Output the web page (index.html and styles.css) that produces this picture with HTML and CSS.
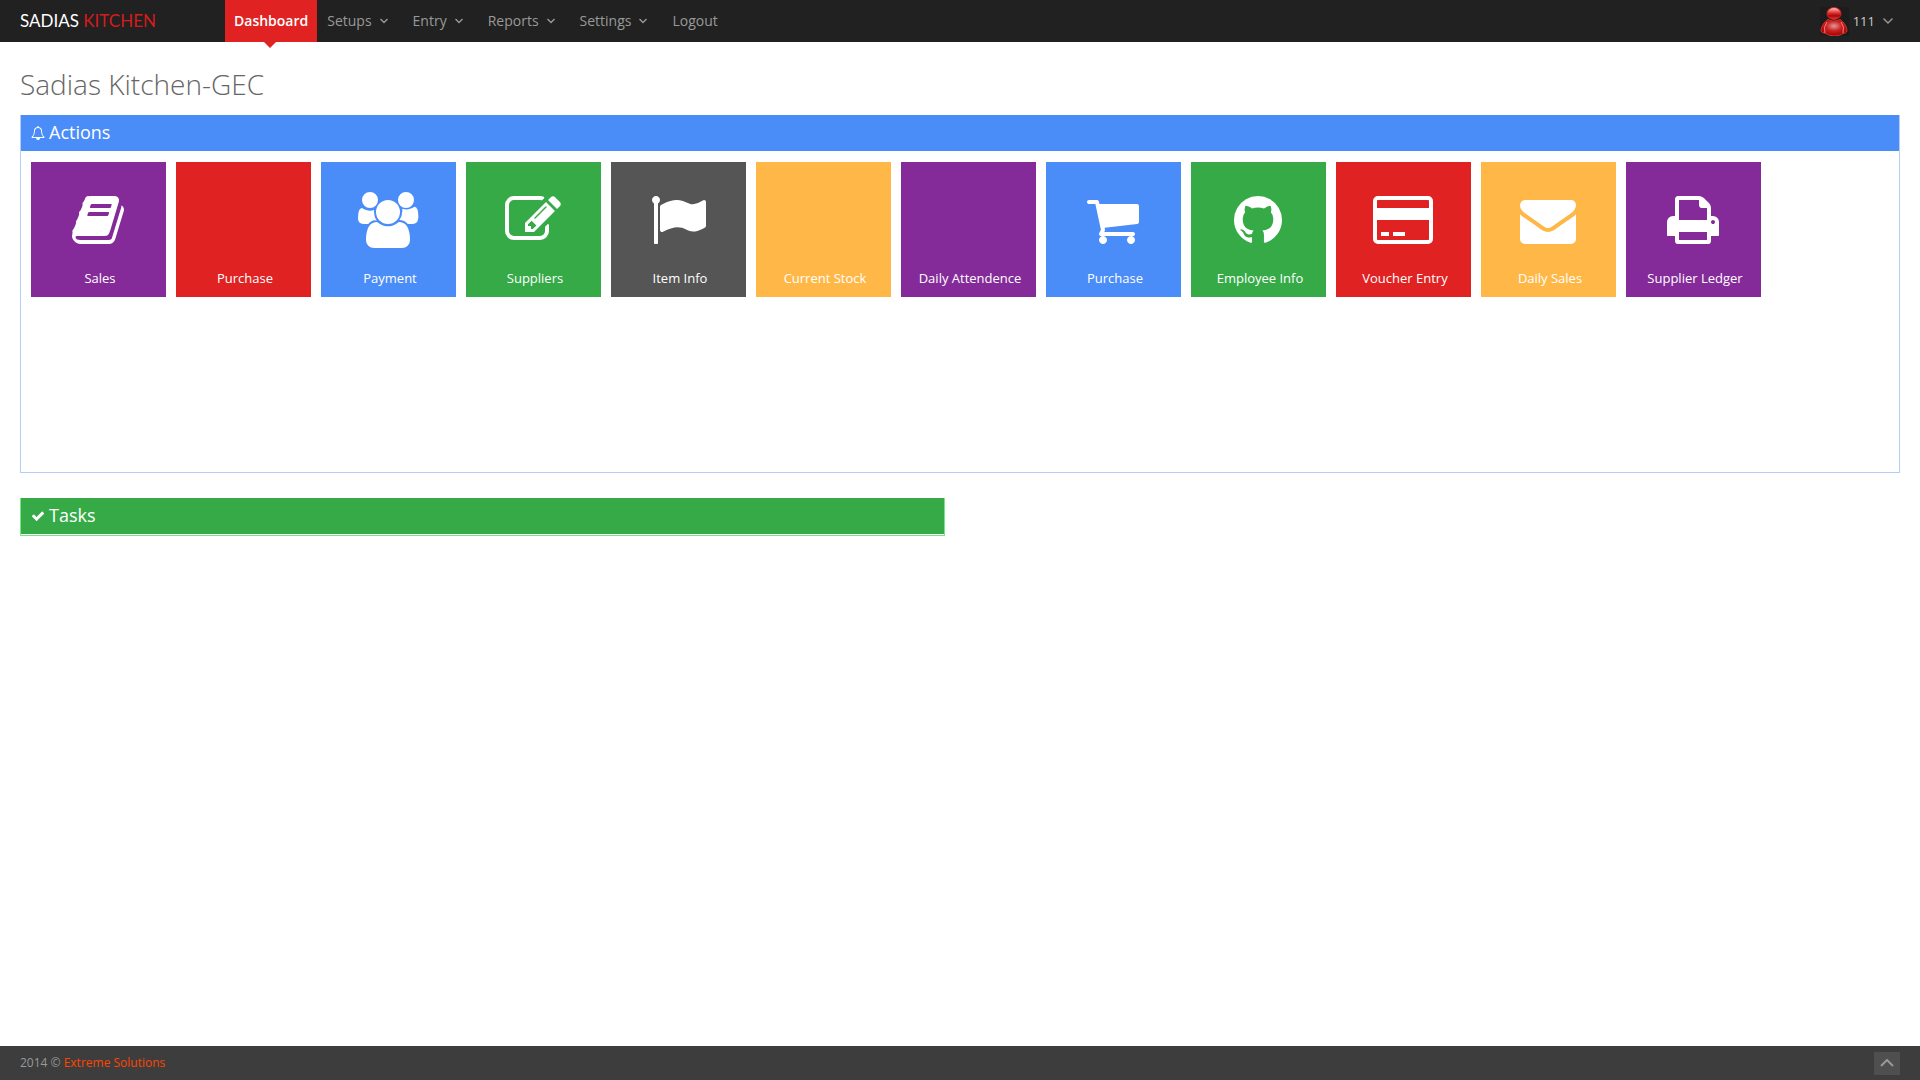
FILE: index.html
```html
<!DOCTYPE html>
<html lang="en">
<head>
  <meta charset="UTF-8">
  <title>Sadias Kitchen | Dashboard</title>
  <link rel="stylesheet" href="styles.css">
</head>
<body>
  <header class="header">
    <a class="brand" href="index.html">SADIAS <span>KITCHEN</span></a>
    <nav class="menu">
      <a class="active" href="index.html">Dashboard</a>
      <a href="#">Setups <svg class="arrow" viewBox="0 0 8 6"><path d="M.5 1L4 4.500 7.500 1"/></svg></a>
      <a href="#">Entry <svg class="arrow" viewBox="0 0 8 6"><path d="M.5 1L4 4.500 7.500 1"/></svg></a>
      <a href="#">Reports <svg class="arrow" viewBox="0 0 8 6"><path d="M.5 1L4 4.500 7.500 1"/></svg></a>
      <a href="#">Settings <svg class="arrow" viewBox="0 0 8 6"><path d="M.5 1L4 4.500 7.500 1"/></svg></a>
      <a href="login.html">Logout</a>
    </nav>
    <a class="user" href="#">
      <svg class="avatar" viewBox="0 0 29 29">
        <defs>
          <radialGradient id="body" cx="50%" cy="40%" r="60%">
            <stop offset="0" stop-color="#e09a94"/>
            <stop offset="0.5" stop-color="#c22"/>
            <stop offset="1" stop-color="#a00000"/>
          </radialGradient>
          <linearGradient id="head" x1="0" y1="0" x2="0" y2="1">
            <stop offset="0" stop-color="#fbd0cc"/>
            <stop offset="0.45" stop-color="#e03030"/>
            <stop offset="0.7" stop-color="#a80808"/>
            <stop offset="1" stop-color="#e04040"/>
          </linearGradient>
        </defs>
        <rect width="29" height="29" fill="#1c1c1c"/>
        <path d="M8 12.500C4 15 1 20 1 24c1 2 3 2 5 2.500 4 3 13 3 17 0 2-.5 3-.5 4-2.500 0-4-3-9-7-11.500-4 2-8 2-12 0z" fill="url(#body)" stroke="#d83030"/>
        <path d="M7 15q-4 5-2 11M21 15q4 5 2 11" fill="none" stroke="#f08080"/>
        <ellipse cx="14" cy="6.500" rx="7" ry="6" fill="url(#head)" stroke="#d02020"/>
      </svg>
      <span>111</span>
      <svg class="arrow big" viewBox="0 0 10 6"><path d="M.5 .5L5 5 9.500 .5"/></svg>
    </a>
  </header>

  <main class="content">
    <h1>Sadias Kitchen-GEC</h1>

    <section class="panel blue">
      <h2>
        <svg viewBox="0 0 1792 1792"><path d="M912 1696q0-16-16-16-59 0-101.500-42.500t-42.500-101.500q0-16-16-16t-16 16q0 73 51.500 124.500t124.500 51.500q16 0 16-16zm-666-288h1300q-266-300-266-832 0-51-24-105t-69-103-121.500-80.500-169.500-31.500-169.500 31.500-121.500 80.500-69 103-24 105q0 532-266 832zm1482 0q0 52-38 90t-90 38h-448q0 106-75 181t-181 75-181-75-75-181h-448q-52 0-90-38t-38-90q50-42 91-88t85-119.500 74.500-158.500 50-206 19.500-260q0-152 117-282.500t307-158.500q-8-19-8-39 0-40 28-68t68-28 68 28 28 68q0 20-8 39 190 28 307 158.500t117 282.500q0 139 19.500 260t50 206 74.500 158.500 85 119.500 91 88z"/></svg>
        Actions
      </h2>
      <div class="tiles">
        <a class="tile purple" href="#">
          <svg viewBox="0 0 1792 1792"><path d="M1703 478q40 57 18 129l-275 906q-19 64-76.500 107.500t-122.500 43.500h-923q-77 0-148.500-53.500t-99.500-131.500q-24-67-2-127 0-4 3-27t4-37q1-8-3-21.500t-3-19.500q2-11 8-21t16.500-23.500 16.500-23.500q23-38 45-91.500t30-91.500q3-10 .5-30t-.5-28q3-11 17-28t17-23q21-36 42-92t25-90q1-9-2.500-32t.5-28q4-13 22-30.500t22-22.500q19-26 42.500-84.500t27.500-96.500q1-8-3-25.500t-2-26.500q2-8 9-18t18-23 17-21q8-12 16.500-30.500t15-35 16-36 19.500-32 26.500-23.500 36-11.500 47.500 5.500l-1 3q38-9 51-9h761q74 0 114 56t18 130l-274 906q-36 119-71.500 153.500t-128.500 34.500h-869q-27 0-38 15-11 16-1 43 24 70 144 70h923q29 0 56-15.500t35-41.500l300-987q7-22 5-57 38 15 59 43zm-1064 2q-4 13 2 22.500t20 9.500h608q13 0 25.500-9.500t16.500-22.500l21-64q4-13-2-22.500t-20-9.500h-608q-13 0-25.500 9.500t-16.500 22.500zm-83 256q-4 13 2 22.500t20 9.500h608q13 0 25.500-9.500t16.500-22.500l21-64q4-13-2-22.500t-20-9.500h-608q-13 0-25.500 9.500t-16.500 22.500z"/></svg>
          <span>Sales</span>
        </a>
        <a class="tile red" href="#">
          <span>Purchase</span>
        </a>
        <a class="tile blue" href="#">
          <svg viewBox="0 0 2048 1792"><path d="M657 896q-162 5-265 128h-134q-82 0-138-40.500t-56-118.500q0-353 124-353 6 0 43.500 21t97.500 42.500 119 21.500q67 0 133-23-5 37-5 66 0 159 93 293zm1071 637q0 120-73 189.500t-194 69.500h-874q-121 0-194-69.500t-73-189.500q0-53 3.500-103.500t14-109 26.500-108.500 43-97.500 62-81 85.500-53.500 111.500-20q10 0 43 21.500t73 48 107 48 135 21.500 135-21.500 107-48 73-48 43-21.500q61 0 111.500 20t85.500 53.500 62 81 43 97.500 26.500 108.500 14 109 3.500 103.500zm-1024-1277q0 106-75 181t-181 75-181-75-75-181 75-181 181-75 181 75 75 181zm704 384q0 159-112.500 271.500t-271.500 112.500-271.500-112.500-112.500-271.500 112.500-271.500 271.500-112.500 271.500 112.500 112.500 271.500zm576 225q0 78-56 118.500t-138 40.500h-134q-103-123-265-128 93-134 93-293 0-29-5-66 66 23 133 23 59 0 119-21.500t97.500-42.500 43.500-21q124 0 124 353zm-128-609q0 106-75 181t-181 75-181-75-75-181 75-181 181-75 181 75 75 181z"/></svg>
          <span>Payment</span>
        </a>
        <a class="tile green" href="#">
          <svg viewBox="0 0 1792 1792"><path d="M888 1184l116-116-152-152-116 116v56h96v96h56zm440-720q-16-16-33 1l-350 350q-17 17-1 33t33-1l350-350q17-17 1-33zm80 594v190q0 119-84.500 203.500t-203.500 84.500h-832q-119 0-203.500-84.500t-84.500-203.500v-832q0-119 84.500-203.500t203.500-84.500h832q63 0 117 25 15 7 18 23 3 17-9 29l-49 49q-14 14-32 8-23-6-45-6h-832q-66 0-113 47t-47 113v832q0 66 47 113t113 47h832q66 0 113-47t47-113v-126q0-13 9-22l64-64q15-15 35-7t20 29zm-96-738l288 288-672 672h-288v-288zm444 132l-92 92-288-288 92-92q28-28 68-28t68 28l152 152q28 28 28 68t-28 68z"/></svg>
          <span>Suppliers</span>
        </a>
        <a class="tile grey" href="#">
          <svg viewBox="0 0 1792 1792"><path d="M320 256q0 72-64 110v1266q0 13-9.500 22.500t-22.500 9.500h-64q-13 0-22.500-9.500t-9.500-22.500v-1266q-64-38-64-110 0-53 37.500-90.500t90.500-37.500 90.500 37.500 37.500 90.500zm1472 64v763q0 25-12.500 38.500t-39.500 27.500q-215 116-369 116-61 0-123.500-22t-108.500-48-115.500-48-142.500-22q-192 0-464 146-17 9-33 9-26 0-45-19t-19-45v-742q0-32 31-55 21-14 79-43 236-120 421-120 107 0 200 29t219 88q38 19 88 19 54 0 117.500-21t110-47 88-47 54.500-21q26 0 45 19t19 45z"/></svg>
          <span>Item Info</span>
        </a>
        <a class="tile yellow" href="#">
          <span>Current Stock</span>
        </a>
        <a class="tile purple" href="#">
          <span>Daily Attendence</span>
        </a>
        <a class="tile blue" href="#">
          <svg viewBox="0 0 1792 1792"><path d="M704 1536q0 52-38 90t-90 38-90-38-38-90 38-90 90-38 90 38 38 90zm896 0q0 52-38 90t-90 38-90-38-38-90 38-90 90-38 90 38 38 90zm128-1088v512q0 24-16.500 42.500t-40.500 21.500l-1044 122q13 60 13 70 0 16-24 64h920q26 0 45 19t19 45-19 45-45 19h-1024q-26 0-45-19t-19-45q0-11 8-31.500t16-36 21.500-40 15.500-29.500l-177-823h-204q-26 0-45-19t-19-45 19-45 45-19h256q16 0 28.500 6.500t19.500 15.500 13 24.500 8 26 5.500 29.500 4.500 26h1201q26 0 45 19t19 45z"/></svg>
          <span>Purchase</span>
        </a>
        <a class="tile green" href="#">
          <svg viewBox="0 0 1792 1792"><path d="M896 128q209 0 385.500 103t279.500 279.500 103 385.500q0 251-146.500 451.500t-378.500 277.500q-27 5-40-7t-13-30q0-3 .5-76.500t.5-134.500q0-97-52-142 57-6 102.500-18t94-39 81-66.500 53-105 20.500-150.500q0-119-79-206 37-91-8-204-28-9-81 11t-92 44l-38 24q-93-26-192-26t-192 26q-16-11-42.500-27t-83.500-38.500-85-13.500q-45 113-8 204-79 87-79 206 0 85 20.500 150t52.500 105 80.500 67 94 39 102.500 18q-39 36-49 103-21 10-45 15t-57 5-65.500-21.500-55.500-62.500q-19-32-48.500-52t-49.500-24l-20-3q-21 0-29 4.500t-5 11.500 9 14 13 12l7 5q22 10 43.500 38t31.500 51l10 23q13 38 44 61.500t67 30 69.500 7 55.500-3.500l23-4q0 38 .5 88.500t.5 54.500q0 18-13 30t-40 7q-232-77-378.500-277.500t-146.500-451.500q0-209 103-385.500t279.500-279.500 385.500-103z"/></svg>
          <span>Employee Info</span>
        </a>
        <a class="tile red" href="#">
          <svg viewBox="0 0 1920 1792"><path d="M1760 128q66 0 113 47t47 113v1216q0 66-47 113t-113 47h-1600q-66 0-113-47t-47-113v-1216q0-66 47-113t113-47h1600zm-1600 128q-13 0-22.500 9.500t-9.500 22.500v224h1664v-224q0-13-9.500-22.500t-22.500-9.500h-1600zm1600 1280q13 0 22.500-9.500t9.500-22.500v-608h-1664v608q0 13 9.500 22.500t22.500 9.500h1600zm-1504-128v-128h256v128h-256zm384 0v-128h384v128h-384z"/></svg>
          <span>Voucher Entry</span>
        </a>
        <a class="tile yellow" href="#">
          <svg viewBox="0 0 1792 1792"><path d="M1792 710v794q0 66-47 113t-113 47h-1472q-66 0-113-47t-47-113v-794q44 49 101 87 362 246 497 345 57 42 92.500 65.500t94.500 48 110 24.500h2q51 0 110-24.500t94.500-48 92.500-65.500q170-123 498-345 57-39 100-87zm0-294q0 79-49 151t-122 123q-376 261-468 325-10 7-42.500 30.500t-54 38-52 32.500-57.500 27-50 9h-2q-23 0-50-9t-57.500-27-52-32.500-54-38-42.500-30.500q-91-64-262-182.500t-205-142.500q-62-42-117-115.500t-55-136.500q0-78 41.500-130t118.500-52h1472q65 0 112.500 47t47.500 113z"/></svg>
          <span>Daily Sales</span>
        </a>
        <a class="tile purple" href="#">
          <svg viewBox="0 0 1792 1792"><path d="M448 1536h896v-256h-896v256zm0-640h896v-384h-160q-40 0-68-28t-28-68v-160h-640v640zm1152 64q0-26-19-45t-45-19-45 19-19 45 19 45 45 19 45-19 19-45zm128 0v416q0 13-9.500 22.500t-22.500 9.500h-224v160q0 40-28 68t-68 28h-960q-40 0-68-28t-28-68v-160h-224q-13 0-22.500-9.500t-9.500-22.500v-416q0-79 56.500-135.500t135.500-56.500h64v-544q0-40 28-68t68-28h672q40 0 88 20t76 48l152 152q28 28 48 76t20 88v256h64q79 0 135.500 56.500t56.500 135.500z"/></svg>
          <span>Supplier Ledger</span>
        </a>
      </div>
    </section>

    <div class="row">
      <section class="panel green">
        <h2>
          <svg viewBox="0 0 1792 1792"><path d="M1671 566q0 40-28 68l-724 724-136 136q-28 28-68 28t-68-28l-136-136-362-362q-28-28-28-68t28-68l136-136q28-28 68-28t68 28l294 295 656-657q28-28 68-28t68 28l136 136q28 28 28 68z"/></svg>
          Tasks
        </h2>
      </section>
    </div>
  </main>

  <footer class="footer">
    <p>2014 &copy; <a href="#">Extreme Solutions</a></p>
    <button type="button" aria-label="Go to top" onclick="window.scrollTo(0, 0)">
      <svg viewBox="0 0 14 8"><path d="M1 7l6-6 6 6"/></svg>
    </button>
  </footer>
</body>
</html>
```
FILE: styles.css
```css
* {
  box-sizing: border-box;
}

body {
  margin: 0;
  min-height: 100vh;
  display: flex;
  flex-direction: column;
  font-family: "Open Sans", sans-serif;
  font-size: 13px;
  line-height: 20px;
  color: #000;
  background: #fff;
}

a {
  text-decoration: none;
}

/* top bar */
.header {
  display: flex;
  height: 42px;
  padding: 0 20px;
  background: #212121;
}

.brand {
  width: 205px;
  font-family: Lato, sans-serif;
  font-size: 17px;
  line-height: 42px;
  color: #fff;
}

.brand span {
  color: #d51c1c;
}

.menu {
  display: flex;
}

.menu a {
  display: flex;
  align-items: center;
  gap: 8px;
  padding: 0 15px 0 10px;
  font-size: 14px;
  color: #999;
}

.menu a.active {
  position: relative;
  padding: 0 9px;
  color: #fff;
  background: #e02222;
  font-weight: 600;
}

.menu a.active::after {
  content: "";
  position: absolute;
  top: 100%;
  left: calc(50% - 7px);
  border: 6px solid transparent;
  border-top-color: #e02222;
  border-bottom: 0;
}

.arrow {
  width: 8px;
  height: 6px;
  fill: none;
  stroke: #999;
  stroke-width: 1.4;
}

.arrow.big {
  width: 10px;
}

.user {
  display: flex;
  align-items: center;
  gap: 4px;
  margin-left: auto;
  padding-right: 7px;
  color: #ccc;
}

.user .arrow {
  margin-left: 4px;
}

.avatar {
  width: 29px;
  height: 29px;
}

/* page */
.content {
  flex: 1;
  padding: 20px;
}

h1 {
  margin: 0 0 9px;
  font-size: 28px;
  line-height: 44px;
  font-weight: 300;
  color: #666;
}

.panel {
  margin-bottom: 25px;
  border: 1px solid #b4cef8;
  border-top: 0;
}

.panel h2 {
  display: flex;
  align-items: center;
  gap: 4px;
  height: 36px;
  margin: 0 0 1px;
  padding: 0 10px 2px;
  font-size: 18px;
  font-weight: 400;
  color: #fff;
  background: #4b8df8;
}

.panel h2 svg {
  width: 14px;
  height: 14px;
  margin-top: 2px;
  fill: #fff;
}

.panel.green {
  border-color: #77e588;
}

.panel.green h2 {
  background: #35aa47;
}

.row {
  display: grid;
  grid-template-columns: 1fr 1fr;
  gap: 30px;
}

/* tiles */
.tiles {
  display: flex;
  flex-wrap: wrap;
  align-content: flex-start;
  gap: 10px;
  min-height: 320px;
  padding: 10px;
}

.tile {
  display: flex;
  flex-direction: column;
  align-items: center;
  width: 135px;
  height: 135px;
  padding-top: 30px;
  color: #fff;
}

.tile svg {
  height: 56px;
  margin-right: 1px;
  fill: #fff;
}

.tile span {
  margin: auto 0 9px 3px;
}

.tile.purple {
  background: #852b99;
}

.tile.red {
  background: #e02222;
}

.tile.blue {
  background: #4b8df8;
}

.tile.green {
  background: #35aa47;
}

.tile.grey {
  background: #555;
}

.tile.yellow {
  background: #ffb848;
}

/* footer */
.footer {
  display: flex;
  justify-content: space-between;
  align-items: center;
  height: 34px;
  padding: 0 20px;
  font-size: 12px;
  color: #999;
  background: #3d3d3d;
}

.footer p {
  margin: 0;
}

.footer a {
  color: #ff4500;
}

.footer button {
  display: flex;
  align-items: center;
  justify-content: center;
  width: 26px;
  height: 23px;
  padding: 0;
  border: 0;
  background: #4f4f4f;
  cursor: pointer;
}

.footer button svg {
  width: 14px;
  height: 8px;
  fill: none;
  stroke: #999;
  stroke-width: 2;
}
```
